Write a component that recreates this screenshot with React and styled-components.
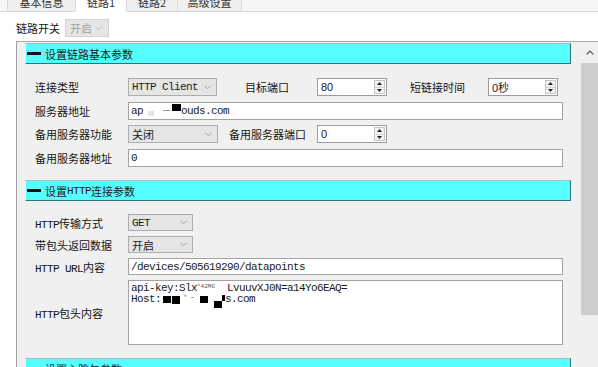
import React from "react";
import styled, { createGlobalStyle } from "styled-components";

const CJK = `"Noto Sans CJK SC", "Noto Sans", sans-serif`;
const MONO = `"Liberation Mono", "Noto Sans CJK SC", monospace`;

const Global = createGlobalStyle`
  html, body { margin: 0; padding: 0; background: #fff; }
  body { font-family: ${CJK}; }
  * { box-sizing: border-box; }
`;

const Window = styled.div`
  width: 598px;
  height: 367px;
  overflow: hidden;
  background: #fff;
  display: flex;
  flex-direction: column;
  font-family: ${CJK};
  font-size: 11px;
  color: #151515;
`;

const TabStrip = styled.div`
  height: 12px;
  flex: none;
  display: flex;
  align-items: flex-end;
  overflow: hidden;
`;

const StripFill = styled.div`
  height: 12px;
  flex: ${(p) => (p.$grow ? 1 : "none")};
  width: ${(p) => (p.$w ? `${p.$w}px` : "auto")};
  background: #f6f6f6;
  border-bottom: 1px solid #d9d9d9;
`;

const Tab = styled.div`
  flex: none;
  width: ${(p) => p.$w}px;
  height: 22px;
  line-height: 25px;
  text-align: center;
  border-left: 1px solid #d9d9d9;
  border-right: ${(p) => (p.$last ? "1px solid #d9d9d9" : "none")};
  border-bottom: 1px solid ${(p) => (p.$active ? "#fff" : "#d9d9d9")};
  background: ${(p) => (p.$active ? "#fff" : "#f0f0f0")};
  color: #333;
  white-space: nowrap;
`;

const SwitchRow = styled.div`
  flex: none;
  display: flex;
  align-items: center;
  gap: 5px;
  padding: 7px 0 0 16px;
  height: 25px;
`;

const PlainLabel = styled.span`
  line-height: 18px;
  white-space: nowrap;
`;

const DisabledSelect = styled.div`
  width: 44px;
  height: 18px;
  background: #e6e6e6;
  border: 1px solid #d4d4d4;
  color: #a3a3a3;
  display: flex;
  align-items: center;
  justify-content: space-between;
  padding: 0 6px 0 4px;
`;

const Panel = styled.div`
  flex: 1;
  min-height: 0;
  margin: 4px 0 0 16px;
  display: flex;
  border-top: 1px solid #a9a9a9;
  border-left: 1px solid #a0a0a0;
  background: #f0f0f0;
`;

const Content = styled.div`
  flex: 1;
  min-width: 0;
  overflow: hidden;
  padding: 1px 10px 0 8px;
  display: flex;
  flex-direction: column;
`;

const SectionHeader = styled.div`
  flex: none;
  height: 21px;
  margin-top: ${(p) => p.$mt || 0}px;
  background: #55ffff;
  border-top: 1px solid #a2c2c2;
  border-left: 1px solid #c8ffff;
  border-right: 1px solid #2f7676;
  border-bottom: 1px solid #2f7676;
  display: flex;
  align-items: center;
  padding-left: 1px;
  color: #1c1c1c;
  white-space: nowrap;
`;

const Dash = styled.span`
  display: inline-block;
  width: 14px;
  height: 3px;
  background: #111;
  margin-right: 4px;
`;

const Lat = styled.span`
  font-family: ${MONO};
  letter-spacing: -0.6px;
`;

const Body = styled.div`
  flex: none;
  display: flex;
  flex-direction: column;
  gap: ${(p) => p.$gap}px;
  padding: ${(p) => p.$pt}px 0 0 10px;
`;

const Row = styled.div`
  display: flex;
  align-items: center;
  height: ${(p) => p.$h}px;
`;

const Label = styled.div`
  flex: none;
  width: 93px;
  white-space: nowrap;
`;

const MidLabel = styled.div`
  flex: none;
  width: ${(p) => p.$w}px;
  text-align: center;
  white-space: nowrap;
`;

const Select = styled.div`
  flex: none;
  width: ${(p) => p.$w}px;
  height: 100%;
  background: #e5e5e5;
  border: 1px solid #adadad;
  display: flex;
  align-items: center;
  justify-content: space-between;
  padding: 0 5px 0 3px;
  font-family: ${(p) => (p.$mono ? MONO : CJK)};
  letter-spacing: ${(p) => (p.$mono ? "-0.6px" : "0")};
  color: #1a1a1a;
  white-space: nowrap;
`;

const Spin = styled.div`
  flex: none;
  width: 70px;
  height: 100%;
  background: #fff;
  border: 1px solid #9c9c9c;
  display: flex;
`;

const SpinText = styled.div`
  flex: 1;
  padding-left: 3px;
  display: flex;
  align-items: center;
  font-family: "Liberation Sans", ${CJK};
  font-size: 11px;
  color: #222;
`;

const SpinButtons = styled.div`
  flex: none;
  width: 11px;
  margin: 1px;
  border: 1px solid #c4c4c4;
  background: #f3f3f3;
  display: flex;
  flex-direction: column;
`;

const SpinHalf = styled.div`
  flex: 1;
  display: flex;
  align-items: center;
  justify-content: center;
  border-top: ${(p) => (p.$down ? "1px solid #d6d6d6" : "none")};
`;

const TextInput = styled.div`
  flex: none;
  width: 435px;
  height: 100%;
  background: #fff;
  border: 1px solid #a3a3a3;
  display: flex;
  align-items: center;
  padding-left: 2px;
  font-family: ${MONO};
  letter-spacing: -0.6px;
  color: #1a1a1a;
  white-space: nowrap;
`;

const TextArea = styled.div`
  flex: none;
  width: 435px;
  height: 100%;
  background: #fff;
  border: 1px solid #a3a3a3;
  padding: 2px 2px;
  font-family: ${MONO};
  letter-spacing: -0.6px;
  line-height: 11px;
  color: #1a1a1a;
  white-space: nowrap;
`;

const Line = styled.div`
  height: 11px;
  display: flex;
  align-items: center;
`;

const Block = styled.span`
  display: inline-block;
  flex: none;
  width: ${(p) => p.$w}px;
  height: ${(p) => p.$h}px;
  background: ${(p) => p.$c || "#000"};
  margin-left: ${(p) => p.$ml || 0}px;
  transform: translateY(${(p) => p.$dy || 0}px);
`;

const Garble = styled.span`
  display: inline-block;
  flex: none;
  width: ${(p) => p.$w}px;
  height: 7px;
  line-height: 7px;
  font-size: 6px;
  letter-spacing: 0;
  color: #555;
  transform: translateY(-2px);
  overflow: hidden;
`;

const ScrollBar = styled.div`
  flex: none;
  width: 17px;
  background: #f0f0f0;
  display: flex;
  flex-direction: column;
`;

const ScrollArrow = styled.div`
  height: 21px;
  display: flex;
  align-items: center;
  justify-content: center;
`;

const Thumb = styled.div`
  height: 252px;
  background: #cdcdcd;
`;

const Chevron = ({ color = "#9a9a9a" }) => (
  <svg width="7" height="5" viewBox="0 0 7 5">
    <path d="M0.5 0.8 L3.5 3.8 L6.5 0.8" fill="none" stroke={color} strokeWidth="1" />
  </svg>
);

const Tri = ({ down }) => (
  <svg width="5" height="3" viewBox="0 0 5 3">
    <path d={down ? "M0 0 H5 L2.5 3 Z" : "M0 3 H5 L2.5 0 Z"} fill="#222" />
  </svg>
);

const SpinBox = ({ value }) => (
  <Spin>
    <SpinText>{value}</SpinText>
    <SpinButtons>
      <SpinHalf>
        <Tri />
      </SpinHalf>
      <SpinHalf $down>
        <Tri down />
      </SpinHalf>
    </SpinButtons>
  </Spin>
);

const Dropdown = ({ w, mono, children }) => (
  <Select $w={w} $mono={mono}>
    <span>{children}</span>
    <Chevron />
  </Select>
);

export default function App() {
  return (
    <Window>
      <Global />
      <TabStrip>
        <StripFill $w={7} />
        <Tab $w={68}>基本信息</Tab>
        <Tab $w={51} $active>
          链路1
        </Tab>
        <Tab $w={51}>链路2</Tab>
        <Tab $w={65} $last>
          高级设置
        </Tab>
        <StripFill $grow />
      </TabStrip>

      <SwitchRow>
        <PlainLabel>链路开关</PlainLabel>
        <DisabledSelect>
          <span>开启</span>
          <Chevron color="#b8b8b8" />
        </DisabledSelect>
      </SwitchRow>

      <Panel>
        <Content>
          <SectionHeader>
            <Dash />
            设置链路基本参数
          </SectionHeader>
          <Body $pt={14} $gap={5.5}>
            <Row $h={18}>
              <Label>连接类型</Label>
              <Dropdown w={89} mono>
                HTTP Client
              </Dropdown>
              <MidLabel $w={100}>目标端口</MidLabel>
              <SpinBox value="80" />
              <MidLabel $w={101}>短链接时间</MidLabel>
              <SpinBox value="0秒" />
            </Row>
            <Row $h={18}>
              <Label>服务器地址</Label>
              <TextInput>
                ap
                <Block $w={6} $h={5} $c="#e4e4e4" $ml={5} $dy={3} />
                <Block $w={7} $h={1} $c="#9a9a9a" $ml={9} />
                <Block $w={9} $h={7} $ml={2} $dy={-3} />
                ouds.com
              </TextInput>
            </Row>
            <Row $h={18}>
              <Label>备用服务器功能</Label>
              <Dropdown w={90}>关闭</Dropdown>
              <MidLabel $w={99}>备用服务器端口</MidLabel>
              <SpinBox value="0" />
            </Row>
            <Row $h={18}>
              <Label>备用服务器地址</Label>
              <TextInput>0</TextInput>
            </Row>
          </Body>

          <SectionHeader $mt={13.5}>
            <Dash />
            设置<Lat>HTTP</Lat>连接参数
          </SectionHeader>
          <Body $pt={13} $gap={5}>
            <Row $h={17}>
              <Label>
                <Lat>HTTP</Lat>传输方式
              </Label>
              <Dropdown w={65} mono>
                GET
              </Dropdown>
            </Row>
            <Row $h={17}>
              <Label>带包头返回数据</Label>
              <Dropdown w={65}>开启</Dropdown>
            </Row>
            <Row $h={17}>
              <Label>
                <Lat>HTTP URL</Lat>内容
              </Label>
              <TextInput>/devices/505619290/datapoints</TextInput>
            </Row>
            <Row $h={65}>
              <Label>
                <Lat>HTTP</Lat>包头内容
              </Label>
              <TextArea>
                <Line>
                  api-key:Slx
                  <Garble $w={30}>ʰ42MG</Garble>
                  LvuuvXJ0N=a14Yo6EAQ=
                </Line>
                <Line>
                  Host:
                  <Block $w={8} $h={7} $ml={2} />
                  <Block $w={8} $h={8} $ml={1} />
                  <Garble $w={20}>&nbsp;ʰ ~</Garble>
                  <Block $w={8} $h={7} />
                  <Block $w={8} $h={7} $ml={6} $dy={5} />
                  <Block $w={3} $h={6} $dy={-2} />
                  s.com
                </Line>
              </TextArea>
            </Row>
          </Body>

          <SectionHeader $mt={13}>
            <Dash />
            设置心跳包参数
          </SectionHeader>
        </Content>
        <ScrollBar>
          <ScrollArrow>
            <svg width="8" height="5" viewBox="0 0 8 5">
              <path d="M0.7 4.3 L4 1 L7.3 4.3" fill="none" stroke="#505050" strokeWidth="1.2" />
            </svg>
          </ScrollArrow>
          <Thumb />
        </ScrollBar>
      </Panel>
    </Window>
  );
}
